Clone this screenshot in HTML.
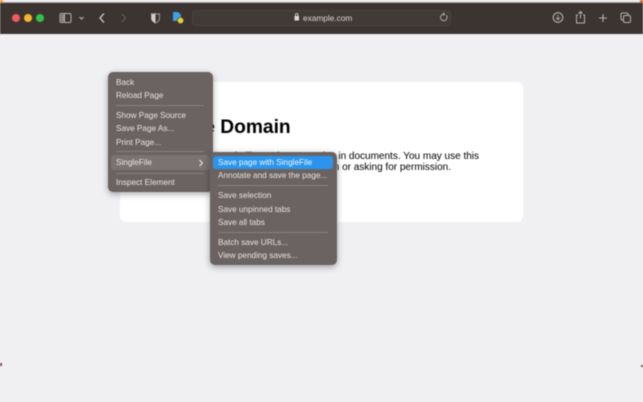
<!DOCTYPE html>
<html><head><meta charset="utf-8"><style>
html,body{margin:0;padding:0;width:643px;height:402px;overflow:hidden;background:#f0f0f3;font-family:"Liberation Sans",sans-serif}
#root{position:relative;width:643px;height:402px;overflow:hidden;filter:blur(.45px)}
.abs{position:absolute;white-space:nowrap}
#bar{position:absolute;left:0;top:3px;width:643px;height:31px;background:#3c3431}
#top{position:absolute;left:0;top:0;width:643px;height:3px;background:linear-gradient(#f2f2f2,#e6e6e6 60%,#777)}
.dot{position:absolute;top:14px;width:8px;height:8px;border-radius:50%}
#url{position:absolute;left:192px;top:10px;width:259px;height:16px;border-radius:4px;background:#423a37;box-shadow:inset 0 0 0 1px #4a4240}
#card{position:absolute;left:120px;top:82px;width:403px;height:140px;background:#fff;border-radius:6px}
.menu{position:absolute;border-radius:5px;background:#6a6361;box-shadow:0 2px 7px rgba(0,0,0,.35);color:#e6e3e1;font-size:8.2px}
.menu .i{position:absolute;left:8px;white-space:nowrap;line-height:10px}
.menu .s{position:absolute;left:8px;height:1px;background:#87807e}
svg{position:absolute;overflow:visible}
</style></head><body><div id="root">
<div id="top"></div><div id="bar"></div>
<div class="abs" style="left:0;top:0;width:3px;height:3px;background:#e89a3a"></div>
<div class="abs" style="left:640px;top:0;width:3px;height:3px;background:#d9622a"></div>
<div class="dot" style="left:12px;background:#ed5a63"></div>
<div class="dot" style="left:24px;background:#f5b52e"></div>
<div class="dot" style="left:36px;background:#30c14b"></div>

<svg style="left:0;top:0" width="643" height="40" fill="none" stroke="#b5b0ae" stroke-width="1">
<rect x="60" y="13.5" width="11" height="9" rx="1.5"/><path d="M64.5 13.5v9" /><rect x="61" y="14.5" width="3" height="7" fill="#8d8785" stroke="none"/>
<path d="M79.5 17l2 2 2-2" stroke-width="1.2"/>
<path d="M104 13.5l-4 4.5 4 4.5" stroke-width="1.4" stroke="#c2bebc"/>
<path d="M122 14l3.500 4-3.500 4" stroke="#5f5755" stroke-width="1.3"/>
<path d="M155.500 13.500c1.800 .6 3 .6 4 .2v4.500c0 2.500-1.800 3.800-4 4.800c-2.200-1-4-2.300-4-4.800v-4.500c1 .4 2.200 .4 4-.2z" stroke="#b5b0ae" stroke-width=".8"/>
<path d="M155.500 13.500v9.500c-2.200-1-4-2.300-4-4.800v-4.500c1 .4 2.200 .4 4-.2z" fill="#d0cdcb" stroke="none"/>
<path d="M173 12h5l3 3v6h-8z" fill="#3f9fe8" stroke="none"/>
<circle cx="180.500" cy="20.500" r="3.200" fill="#e8cf33" stroke="#4a4438" stroke-width=".7"/>
<circle cx="558" cy="17.500" r="4.800" stroke-width="1.100"/><path d="M558 14.800v4.800M556 17.800l2 2 2-2" stroke-width=".9"/>
<path d="M578 15h-1.500v8h8v-8h-1.500M580.500 18.500v-7M578.500 13.500l2-2 2 2" stroke-width="1"/>
<path d="M603 14v8M599 18h8" stroke-width="1.100"/>
<rect x="621" y="13" width="7" height="7" rx="1.500"/><rect x="623.500" y="15.500" width="7" height="7" rx="1.500" fill="#3c3431"/>
</svg>

<div id="url"></div>
<svg style="left:0;top:0" width="643" height="40" fill="none">
<rect x="294.500" y="16" width="4.500" height="4.500" rx=".6" fill="#dedbd9"/><path d="M295.500 16v-1.200a1.250 1.250 0 0 1 2.500 0v1.200" stroke="#dedbd9" stroke-width=".8"/>
<path d="M446.300 15.200a3.300 3.300 0 1 1-2.600-1.100M443.200 12.600l1.500 1.500-1.500 1.400" stroke="#b5b0ae" stroke-width=".9"/>
</svg>
<div class="abs" style="left:303px;top:13px;font-size:8.3px;line-height:10px;color:#dad7d5">example.com</div>

<div id="card"></div>
<div class="abs" style="left:136px;top:116.500px;font-size:19.200px;line-height:22px;font-weight:bold;color:#000">Example Domain</div>
<div class="abs" style="left:479px;top:151px;transform:translateX(-100%);font-size:10px;line-height:12px;color:#000">This domain is for use in illustrative examples in documents. You may use this</div>
<div class="abs" style="left:451px;top:162px;transform:translateX(-100%);font-size:10px;line-height:12px;color:#000">domain in literature without prior coordination or asking for permission.</div>

<div class="menu" style="left:108px;top:72px;width:105px;height:120px">
<div class="i" style="top:6px">Back</div>
<div class="i" style="top:19px">Reload Page</div>
<div class="s" style="top:33px;width:88px"></div>
<div class="i" style="top:39px">Show Page Source</div>
<div class="i" style="top:52px">Save Page As...</div>
<div class="i" style="top:65.500px">Print Page...</div>
<div class="s" style="top:79px;width:88px"></div>
<div style="position:absolute;left:3px;top:83px;width:99px;height:15px;border-radius:3px;background:#7b7371"></div>
<div class="i" style="top:86px">SingleFile</div>
<svg style="left:90px;top:87px" width="6" height="8" fill="none"><path d="M1.500 1l3 3-3 3" stroke="#eee" stroke-width="1"/></svg>
<div class="s" style="top:101px;width:88px"></div>
<div class="i" style="top:106px">Inspect Element</div>
</div>

<div class="menu" style="left:209.500px;top:152px;width:127px;height:113px">
<div style="position:absolute;left:3px;top:3.500px;width:120px;height:13px;border-radius:3px;background:#2b95ee"></div>
<div class="i" style="left:8.500px;top:5.500px;color:#eef6fd">Save page with SingleFile</div>
<div class="i" style="left:8.500px;top:19px">Annotate and save the page...</div>
<div class="s" style="left:8.500px;top:32.500px;width:110px"></div>
<div class="i" style="left:8.500px;top:39px">Save selection</div>
<div class="i" style="left:8.500px;top:52.500px">Save unpinned tabs</div>
<div class="i" style="left:8.500px;top:65.500px">Save all tabs</div>
<div class="s" style="left:8.500px;top:80px;width:110px"></div>
<div class="i" style="left:8.500px;top:85.500px">Batch save URLs...</div>
<div class="i" style="left:8.500px;top:98.500px">View pending saves...</div>
</div>

<div class="abs" style="left:0;top:363px;width:2px;height:3px;background:#8a4a58"></div>
<div class="abs" style="left:641px;top:365px;width:2px;height:2px;background:#6a5a50"></div>
</div></body></html>
